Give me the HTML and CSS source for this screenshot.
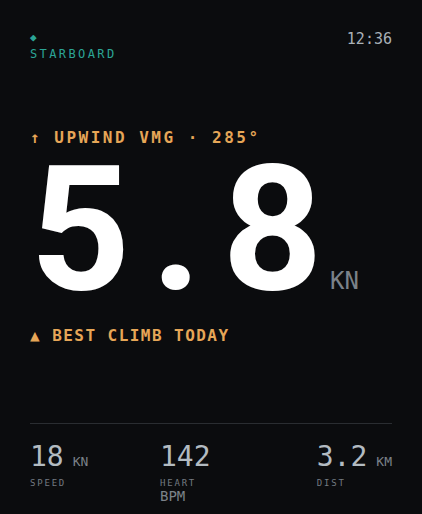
FILE: index.html
```html
<!DOCTYPE html>
<html lang="en">
  <head>
    <meta charset="utf-8" />
    <meta name="viewport" content="width=device-width,initial-scale=1.0" />
    <title>Sail</title>
    <link rel="stylesheet" href="styles.css">
  </head>
  <body>
    <main class="screen">
      <header class="top">
        <div class="tack">
          <span class="tack-mark">◆</span>
          <span class="tack-name">STARBOARD</span>
        </div>
        <span class="clock">12:36</span>
      </header>

      <p class="heading">↑ UPWIND VMG · 285°</p>

      <div class="hero">
        <span class="hero-value">5.8</span>
        <span class="hero-unit">KN</span>
      </div>

      <p class="note">▲ BEST CLIMB TODAY</p>

      <section class="stats">
        <div class="stat">
          <div class="stat-value">18<span class="unit">KN</span></div>
          <div class="stat-label">SPEED</div>
        </div>
        <div class="stat">
          <div class="stat-value">142</div>
          <div class="stat-label">HEART</div>
          <div class="unit unit-below">BPM</div>
        </div>
        <div class="stat">
          <div class="stat-value">3.2<span class="unit">KM</span></div>
          <div class="stat-label">DIST</div>
        </div>
      </section>
    </main>
  </body>
</html>
```

FILE: styles.css
```css
body {
  margin: 0;
  background: #0b0c0e;
  font-family: "DejaVu Sans Mono", "Liberation Mono", monospace;
}

.screen {
  width: 422px;
  height: 514px;
  box-sizing: border-box;
  padding: 30px 30px 0;
  display: flex;
  flex-direction: column;
}

.top {
  display: flex;
  justify-content: space-between;
  align-items: flex-start;
}
.tack {
  display: flex;
  flex-direction: column;
  color: #2ba596;
}
.tack-mark {
  font-size: 11px;
  line-height: 15px;
}
.tack-name {
  font-size: 12px;
  line-height: 18px;
  letter-spacing: 0.2em;
}
.clock {
  color: #a9b1b8;
  font-size: 15px;
  line-height: 18px;
}

.heading {
  margin: 67px 0 0;
  color: #e6a657;
  font-size: 16px;
  font-weight: 700;
  line-height: 16px;
  letter-spacing: 2.5px;
}

.hero {
  display: flex;
  align-items: baseline;
  margin-top: -2px;
}
.hero-value {
  color: #ffffff;
  font-family: Roboto, "Liberation Sans", sans-serif;
  font-weight: 700;
  font-size: 175px;
  line-height: 172px;
  letter-spacing: 20.5px;
}
.hero-unit {
  color: #7b8289;
  font-size: 24px;
  margin-left: -13px;
}

.note {
  margin: 10px 0 0;
  color: #e6a657;
  font-size: 16px;
  font-weight: 700;
  line-height: 20px;
  letter-spacing: 1.45px;
}

.stats {
  margin-top: 77px;
  border-top: 1px solid #2a2d31;
  padding-top: 18px;
  display: grid;
  grid-template-columns: 130px 1fr auto;
}
.stat-value {
  color: #b3bbc1;
  font-size: 28px;
  line-height: 30px;
}
.unit {
  color: #7b8289;
  font-size: 13px;
  line-height: 1;
  margin-left: 9px;
}
.stat-label {
  color: #737a81;
  font-size: 9px;
  line-height: 14px;
  letter-spacing: 0.2em;
  margin-top: 4px;
}
.unit-below {
  margin-left: 0;
  font-size: 14px;
  line-height: 12px;
}
```
